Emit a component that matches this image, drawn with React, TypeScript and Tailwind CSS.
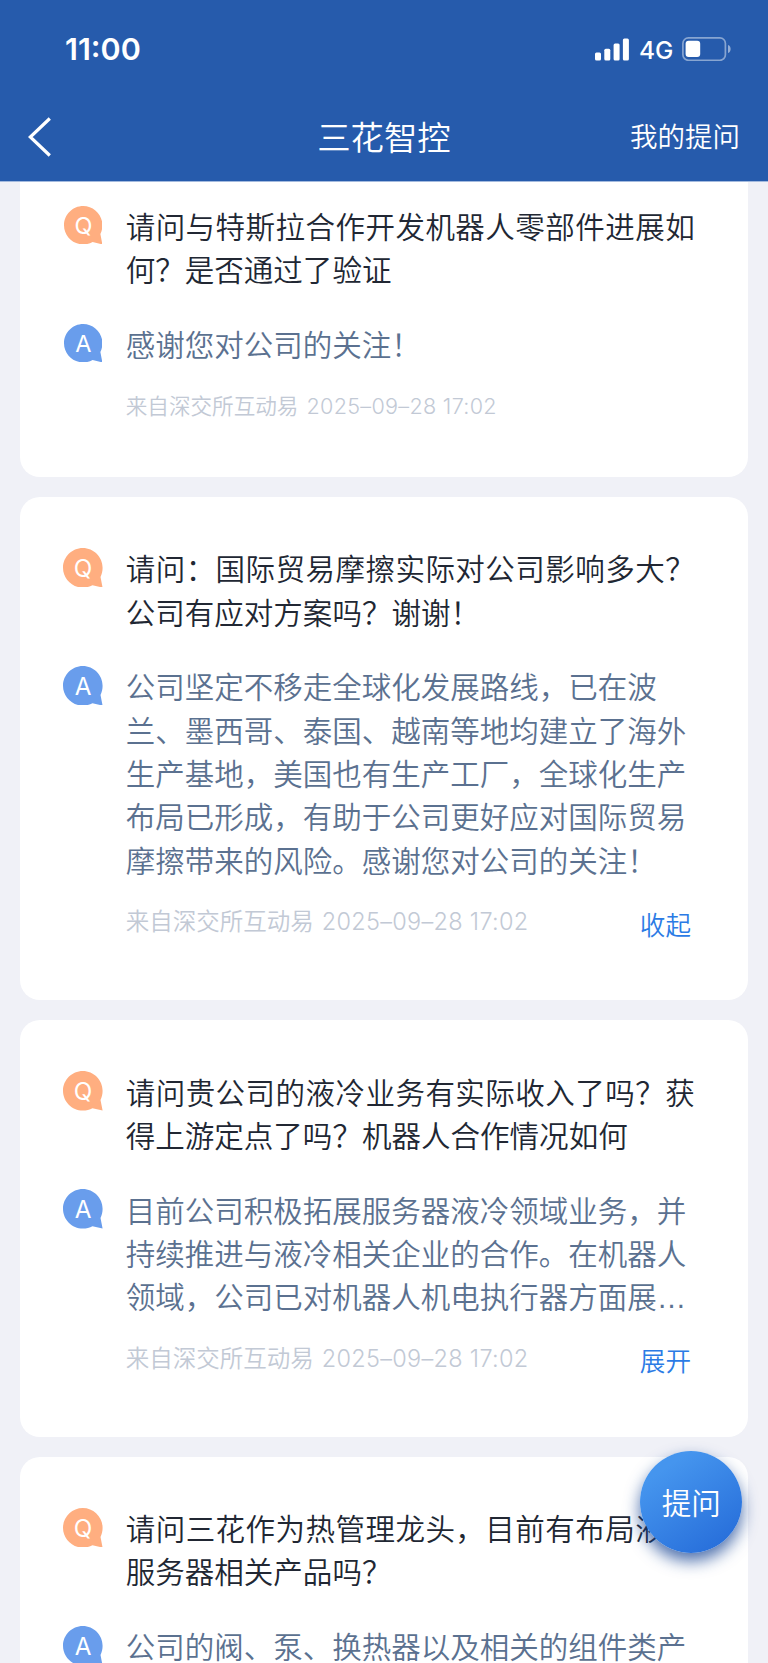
import React from "react";
import clsx from "clsx";

interface QaItem {
  id: string;
  question: string;
  answer: string;
  truncated?: boolean;
  source: string;
  date: string;
  action?: string;
  small?: boolean;
}

const items: QaItem[] = [
  {
    id: "qa-1",
    question: "请问与特斯拉合作开发机器人零部件进展如何？是否通过了验证",
    answer: "感谢您对公司的关注！",
    source: "来自深交所互动易",
    date: "2025–09–28 17:02",
    small: true
  },
  {
    id: "qa-2",
    question: "请问：国际贸易摩擦实际对公司影响多大？公司有应对方案吗？谢谢！",
    answer:
      "公司坚定不移走全球化发展路线，已在波兰、墨西哥、泰国、越南等地均建立了海外生产基地，美国也有生产工厂，全球化生产布局已形成，有助于公司更好应对国际贸易摩擦带来的风险。感谢您对公司的关注！",
    source: "来自深交所互动易",
    date: "2025–09–28 17:02",
    action: "收起"
  },
  {
    id: "qa-3",
    question: "请问贵公司的液冷业务有实际收入了吗？获得上游定点了吗？机器人合作情况如何",
    answer: "目前公司积极拓展服务器液冷领域业务，并持续推进与液冷相关企业的合作。在机器人领域，公司已对机器人机电执行器方面展",
    truncated: true,
    source: "来自深交所互动易",
    date: "2025–09–28 17:02",
    action: "展开"
  },
  {
    id: "qa-4",
    question: "请问三花作为热管理龙头，目前有布局液冷服务器相关产品吗？",
    answer: "公司的阀、泵、换热器以及相关的组件类产",
    source: "",
    date: ""
  }
];

function Bubble({ letter, small }: { letter: "Q" | "A"; small?: boolean }) {
  return (
    <svg
      viewBox="0 0 40 40"
      className={clsx("shrink-0", small ? "w-[38.4px] h-[38.4px] mx-[0.6px] mt-px" : "w-[39.6px] h-[39.6px] mt-px")}
    >
      <path
        d="M20 0C9 0 0 9 0 20s9 20 20 20c3.600 0 7-.900 9.800-2.400L40 40l-2.100-10.800C39.300 26.400 40 23.300 40 20 40 9 31 0 20 0Z"
        fill={letter === "Q" ? "#ffae80" : "#699dec"}
      />
      <text
        x="20.300"
        y="29.500"
        textAnchor="middle"
        fill="#fff"
        className="font-['Inter',sans-serif] text-[24.500px] font-normal"
      >
        {letter}
      </text>
    </svg>
  );
}

function StatusBar() {
  return (
    <div className="h-[97px] pl-[65px] pr-[36px] flex justify-between text-white font-['Inter',sans-serif]">
      <span className="mt-[30px] text-[30.500px] leading-[38px] font-semibold">11:00</span>
      <div className="mt-[37px] h-6 flex items-center">
        <svg viewBox="0 0 34 23" className="w-[34px] h-[23px]" fill="#fff">
          <rect x="0" y="14.500" width="6" height="8" rx="1.500" />
          <rect x="9.300" y="10.700" width="6" height="11.800" rx="1.500" />
          <rect x="18.600" y="5.500" width="6" height="17" rx="1.500" />
          <rect x="27.900" y="0.500" width="6" height="22" rx="1.500" />
        </svg>
        <span className="ml-2.5 w-[34px] mt-[2px] text-[24.500px] leading-6 font-medium">4G</span>
        <svg viewBox="0 0 50 24" className="ml-[9px] w-[50px] h-6">
          <rect x="0.900" y="0.900" width="42.500" height="22.400" rx="5.500" fill="none" stroke="#fff" strokeOpacity="0.450" strokeWidth="1.700" />
          <rect x="3.600" y="3.800" width="14.600" height="16.300" rx="3" fill="#fff" />
          <path d="M46 8c3.500 1 3.500 7 0 8Z" fill="#fff" fillOpacity="0.500" />
        </svg>
      </div>
    </div>
  );
}

function QaCard({ item, first }: { item: QaItem; first: boolean }) {
  return (
    <article
      className={clsx(
        "bg-white rounded-[20px] pl-[43.300px] pr-[57px]",
        first ? "rounded-t-none pt-[22.500px] h-[295.300px]" : "pt-[49.900px] pb-[62.500px]"
      )}
    >
      <div className="flex gap-[22.800px]">
        <Bubble letter="Q" small={item.small} />
        <p className="w-[569px] -mt-[0.500px] shrink-0 text-justify text-[29.540px] leading-[43.320px] text-[#212733]">{item.question}</p>
      </div>
      <div className="mt-[31.900px] flex gap-[22.800px]">
        <Bubble letter="A" small={item.small} />
        <p className="w-[569px] -mt-[0.500px] shrink-0 text-[29.500px] leading-[43.320px] text-[#5b7190]">
          {item.answer}
          {item.truncated && <span className="font-['Liberation_Sans',sans-serif] leading-none">…</span>}
        </p>
      </div>
      {item.date && (
        <div className="ml-[62.400px] mt-[24px] h-[33px] flex items-center justify-between text-[#c2c9d5]">
          <p className={clsx("whitespace-nowrap", item.small ? "text-[21.600px]" : "text-[23.500px]")}>
            {item.source}
            <span className="ml-2 font-['Inter',sans-serif] tracking-[0.300px]">{item.date}</span>
          </p>
          {item.action && <button className="mt-[5px] text-[25.600px] leading-8 text-[#2b7be5]">{item.action}</button>}
        </div>
      )}
    </article>
  );
}

export default function App() {
  return (
    <div className="relative w-[768px] h-[1663px] overflow-hidden bg-[#f0f1f7] font-['Noto_Sans_CJK_SC',sans-serif] font-[350]">
      <header className="h-[182px] bg-[#265bac] border-b border-[#a3bade] text-white">
        <StatusBar />
        <div className="h-[78px] pl-7 pr-[28px] grid grid-cols-3 items-center">
          <svg viewBox="0 0 24 40" className="w-6 h-10 mt-px" fill="none" stroke="#fff" strokeWidth="3.200">
            <path d="M21.800 1.500 2.300 20l19.500 18.500" />
          </svg>
          <h1 className="text-center text-[33.400px] leading-10">三花智控</h1>
          <span className="-mt-[3px] text-right text-[27.500px] leading-10">我的提问</span>
        </div>
      </header>

      <main className="px-5 flex flex-col gap-[19.700px]">
        {items.map((item, i) => (
          <QaCard key={item.id} item={item} first={i === 0} />
        ))}
      </main>

      <button className="absolute left-[640px] top-[1450.700px] w-[102.400px] h-[102.400px] rounded-full bg-linear-[145deg,#4595ee_20%,#276eda_90%] text-white text-[29.540px] shadow-[0_8px_16px_rgba(20,66,145,0.75)]">
        提问
      </button>
    </div>
  );
}
